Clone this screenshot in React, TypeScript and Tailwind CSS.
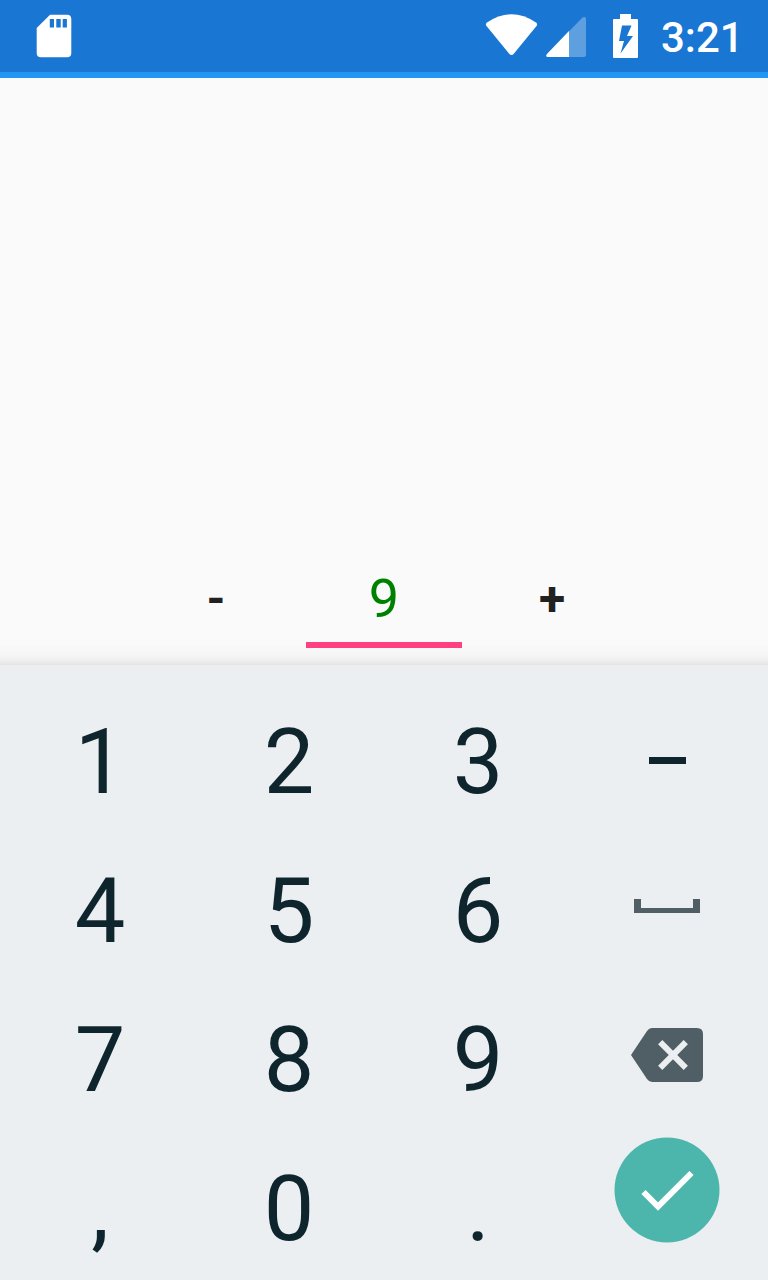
const keys = ['1', '2', '3', '−', '4', '5', '6', 'space', '7', '8', '9', 'del', ',', '0', '.', 'ok'];

function Key({ value }: { value: string }) {
  if (value === 'space')
    return <svg className="mb-[11px] h-[14px] w-[66px]" viewBox="0 0 66 14"><path d="M0 0h7v9h52V0h7v14H0z" fill="#505e66" /></svg>;
  if (value === 'del')
    return (
      <svg className="mb-[12px] h-[54px] w-[72px]" viewBox="0 0 72 54">
        <path d="M66 0H21q-3 0-5 3L0 27l16 24q2 3 5 3h45q6 0 6-6V6q0-6-6-6z" fill="#505e66" />
        <path d="M29.2 14.2l25.6 25.6M54.8 14.2L29.2 39.8" stroke="#eceff1" strokeWidth="6" />
      </svg>
    );
  if (value === 'ok')
    return (
      <svg className="mb-[39px] h-[106px] w-[106px]" viewBox="0 0 106 106">
        <circle cx="53" cy="53" r="52.5" fill="#4db6ac" />
        <path d="M29.5 55L44 69.5 77.5 36" fill="none" stroke="#fff" strokeWidth="6" />
      </svg>
    );
  if (value === '−') return <span className="mb-[4px] h-[7px] w-[37px] bg-[#0f252e]" aria-label="minus" />;
  return <span>{value}</span>;
}

export default function App() {
  return (
    <div className="flex h-[1280px] w-[768px] flex-col overflow-hidden bg-[#fafafa] font-['Roboto',sans-serif]">
      <header className="flex h-[78px] shrink-0 border-b-[6px] border-[#2196f3] bg-[#1976d2]">
        <svg className="h-[72px] w-[768px]" viewBox="0 0 768 72" fill="#fff">
          <path d="M50 14.7h17q4.3 0 4.3 4.3v34q0 4.3-4.3 4.3H41q-4.3 0-4.3-4.3V28z" />
          <path d="M49.800 19h4.200v8.500h-4.200zM56.300 19h4.400v8.500h-4.400zM62.700 19h4.200v8.500h-4.200z" fill="#1976d2" />
          <path d="M487 22.5Q511.500 6 536 22.500Q538 24 536.500 26L514 53.500Q511.500 56.500 509 53.500L486.500 26Q485 24 487 22.500z" />
          <path d="M582.500 17.500Q586 16 586 19V55Q586 57 584 57H548Q545 56.500 547 54z" opacity=".3" />
          <path d="M569 31V57H548Q545 56.500 547 54z" />
          <path d="M620 14h11v5h6q1 0 1 1v37q0 1-1 1h-23q-1 0-1-1V20q0-1 1-1h6z" />
          <path d="M622 25.500h9.500L627 36h6L620.500 53.500 624 41h-5z" fill="#1976d2" />
          <text x="661" y="52" fontSize="42" fontWeight="500">3:21</text>
        </svg>
      </header>
      <main className="flex h-[587px] shrink-0 items-end justify-center bg-[linear-gradient(to_top,#e4e4e4_0px,#eeeeee_4px,#f5f5f5_9px,#fafafa_22px)] pb-[17px]">
        <button className="h-[98px] w-[180px] text-[48px] font-bold text-[#212121]">-</button>
        <div className="h-[98px] w-[156px] border-b-[6px] border-[#ff4081] text-center text-[54px] leading-[98px] text-[#008000]">9</div>
        <button className="h-[98px] w-[180px] text-[48px] font-bold text-[#212121]">+</button>
      </main>
      <section className="grid h-[615px] shrink-0 grid-cols-[194px_184px_194px_184px] grid-rows-[149px_149px_149px_149px] bg-[#eceff1] pl-[3px] pt-[23px] text-[90px] leading-none text-[#0f252e]">
        {keys.map((key) => (
          <button key={key} className="flex items-center justify-center"><Key value={key} /></button>
        ))}
      </section>
    </div>
  );
}
